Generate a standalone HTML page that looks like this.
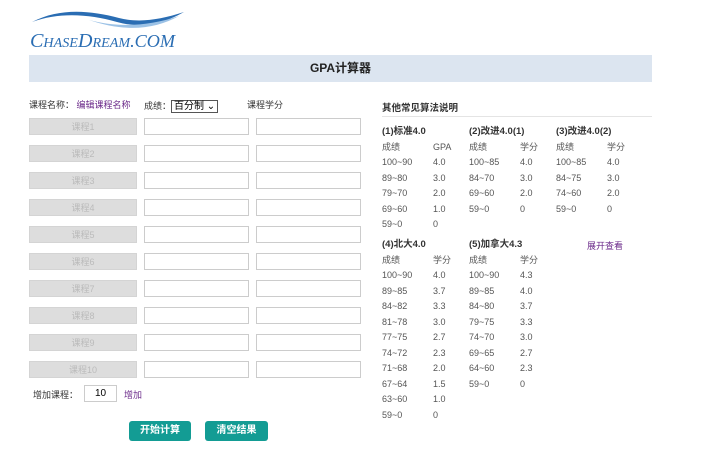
<!DOCTYPE html>
<html><head><meta charset="utf-8"><style>
body{margin:0;width:720px;height:470px;background:#fff;font-family:"Liberation Sans","Noto Sans CJK SC",sans-serif;font-size:9px;color:#333;position:relative;overflow:hidden}
.a{position:absolute;white-space:nowrap}
.g{position:absolute;left:29px;width:108px;height:17px;background:#ddd;border:1px solid #d4d4d4;box-sizing:border-box;color:#bbb;text-align:center;line-height:16px;font-size:9px}
.i{position:absolute;width:105px;height:17px;border:1px solid #ccc;box-sizing:border-box;background:#fff}
.t{position:absolute;font-size:9px;color:#555;line-height:15.5px}
.h{font-weight:bold;color:#333;font-size:9.5px}
.btn{position:absolute;top:421px;height:20px;background:#139c94;color:#fff;font-weight:bold;font-size:10px;text-align:center;line-height:20px;border-radius:3px}
</style></head><body>
<svg class="a" style="left:29px;top:6px" width="160" height="46">
<path d="M3 16 C30 2 60 4 90 12 C110 17 130 14 155 6 C130 20 110 22 88 16 C60 8 30 6 3 16Z" fill="#2a6db3"/>
<path d="M60 14 C90 22 120 20 150 10 C125 24 95 26 60 14Z" fill="#9cc2e6"/>
<text x="1" y="41" font-family="Liberation Serif,serif" font-style="italic" font-size="20" fill="#2a6db3" textLength="145" lengthAdjust="spacingAndGlyphs">C<tspan font-size="14">HASE</tspan>D<tspan font-size="14">REAM</tspan><tspan font-size="18">.COM</tspan></text>
</svg>
<div class="a" style="left:29px;top:55px;width:623px;height:27px;background:#dce5f0;text-align:center;line-height:27px;font-weight:bold;font-size:12px;color:#222">GPA计算器</div>
<div class="a" style="left:29px;top:98px">课程名称： <span style="color:#6b2a8a">编辑课程名称</span></div>
<div class="a" style="left:144px;top:97px">成绩：<span style="border:1px solid #555;padding:0 2px;font-size:10px;color:#000">百分制 ⌄</span></div>
<div class="a" style="left:247px;top:98px">课程学分</div>
<div class="g" style="top:118px">课程1</div><div class="i" style="left:144px;top:118px"></div><div class="i" style="left:256px;top:118px"></div>
<div class="g" style="top:145px">课程2</div><div class="i" style="left:144px;top:145px"></div><div class="i" style="left:256px;top:145px"></div>
<div class="g" style="top:172px">课程3</div><div class="i" style="left:144px;top:172px"></div><div class="i" style="left:256px;top:172px"></div>
<div class="g" style="top:199px">课程4</div><div class="i" style="left:144px;top:199px"></div><div class="i" style="left:256px;top:199px"></div>
<div class="g" style="top:226px">课程5</div><div class="i" style="left:144px;top:226px"></div><div class="i" style="left:256px;top:226px"></div>
<div class="g" style="top:253px">课程6</div><div class="i" style="left:144px;top:253px"></div><div class="i" style="left:256px;top:253px"></div>
<div class="g" style="top:280px">课程7</div><div class="i" style="left:144px;top:280px"></div><div class="i" style="left:256px;top:280px"></div>
<div class="g" style="top:307px">课程8</div><div class="i" style="left:144px;top:307px"></div><div class="i" style="left:256px;top:307px"></div>
<div class="g" style="top:334px">课程9</div><div class="i" style="left:144px;top:334px"></div><div class="i" style="left:256px;top:334px"></div>
<div class="g" style="top:361px">课程10</div><div class="i" style="left:144px;top:361px"></div><div class="i" style="left:256px;top:361px"></div>
<div class="a" style="left:33px;top:388px">增加课程：</div>
<div class="a" style="left:84px;top:385px;width:33px;height:17px;border:1px solid #ccc;box-sizing:border-box;text-align:center;line-height:15px;font-size:10px;color:#000">10</div>
<div class="a" style="left:124px;top:388px;color:#6b2a8a">增加</div>
<div class="btn" style="left:129px;width:62px">开始计算</div>
<div class="btn" style="left:205px;width:63px">清空结果</div>
<div class="a h" style="left:382px;top:100px">其他常见算法说明</div>
<div class="a" style="left:382px;top:116px;width:270px;border-top:1px solid #e4e4e4"></div>
<div class="t" style="left:382px;top:124px"><span class="h">(1)标准4.0</span><br>成绩<br>100~90<br>89~80<br>79~70<br>69~60<br>59~0</div>
<div class="t" style="left:433px;top:124px"><br>GPA<br>4.0<br>3.0<br>2.0<br>1.0<br>0</div>
<div class="t" style="left:469px;top:124px"><span class="h">(2)改进4.0(1)</span><br>成绩<br>100~85<br>84~70<br>69~60<br>59~0</div>
<div class="t" style="left:520px;top:124px"><br>学分<br>4.0<br>3.0<br>2.0<br>0</div>
<div class="t" style="left:556px;top:124px"><span class="h">(3)改进4.0(2)</span><br>成绩<br>100~85<br>84~75<br>74~60<br>59~0</div>
<div class="t" style="left:607px;top:124px"><br>学分<br>4.0<br>3.0<br>2.0<br>0</div>
<div class="t" style="left:382px;top:237px"><span class="h">(4)北大4.0</span><br>成绩<br>100~90<br>89~85<br>84~82<br>81~78<br>77~75<br>74~72<br>71~68<br>67~64<br>63~60<br>59~0</div>
<div class="t" style="left:433px;top:237px"><br>学分<br>4.0<br>3.7<br>3.3<br>3.0<br>2.7<br>2.3<br>2.0<br>1.5<br>1.0<br>0</div>
<div class="t" style="left:469px;top:237px"><span class="h">(5)加拿大4.3</span><br>成绩<br>100~90<br>89~85<br>84~80<br>79~75<br>74~70<br>69~65<br>64~60<br>59~0</div>
<div class="t" style="left:520px;top:237px"><br>学分<br>4.3<br>4.0<br>3.7<br>3.3<br>3.0<br>2.7<br>2.3<br>0</div>
<div class="a" style="left:587px;top:239px;color:#6b2a8a">展开查看</div>
</body></html>
